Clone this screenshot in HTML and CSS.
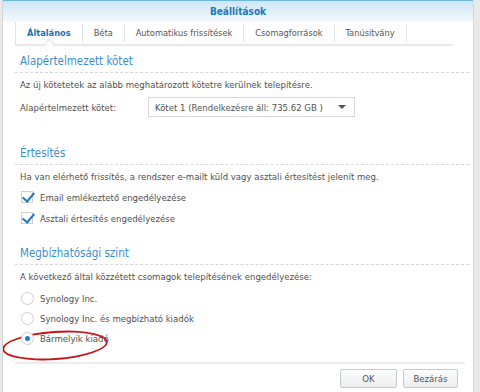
FILE: index.html
```html
<!DOCTYPE html>
<html lang="hu">
<head>
  <meta charset="UTF-8" />
  <title>Beállítások</title>
  <link rel="stylesheet" href="styles.css">
</head>
<body>

  <div class="window">
    <div class="titlebar">Beállítások</div>

    <!-- Fülek -->
    <div class="tabs">
      <div class="tab active">Általános</div>
      <div class="tab">Béta</div>
      <div class="tab">Automatikus frissítések</div>
      <div class="tab">Csomagforrások</div>
      <div class="tab">Tanúsítvány</div>
    </div>

    <div class="content">
      <div class="section volume">
        <h2>Alapértelmezett kötet</h2>
        <p>Az új kötetetek az alább meghatározott kötetre kerülnek telepítésre.</p>
        <div class="field">
          <span class="label">Alapértelmezett kötet:</span>
          <div class="select">
            <span>Kötet 1 (Rendelkezésre áll: 735.62 GB )</span>
            <span class="arrow"></span>
          </div>
        </div>
      </div>

      <div class="section notify">
        <h2>Értesítés</h2>
        <p>Ha van elérhető frissítés, a rendszer e-mailt küld vagy asztali értesítést jelenít meg.</p>
        <div class="option"><span class="check"></span>Email emlékeztető engedélyezése</div>
        <div class="option"><span class="check"></span>Asztali értesítés engedélyezése</div>
      </div>

      <div class="section trust">
        <h2>Megbízhatósági szint</h2>
        <p>A következő által közzétett csomagok telepítésének engedélyezése:</p>
        <div class="option"><span class="radio"></span>Synology Inc.</div>
        <div class="option"><span class="radio"></span>Synology Inc. és megbízható kiadók</div>
        <div class="option marked"><span class="radio on"></span>Bármelyik kiadó</div>
      </div>
    </div>

    <div class="footer">
      <button class="btn ok">OK</button>
      <button class="btn">Bezárás</button>
    </div>
  </div>

</body>
</html>
```

FILE: styles.css
```css
body {
  margin: 0;
  background: #e9e9e9;
  font-family: "DejaVu Sans Condensed", "DejaVu Sans", sans-serif;
  font-size: 9.5px;
  color: #505050;
}

.window {
  width: 470px;
  height: 392px;
  margin-left: 2px;
  background: #fff;
  border-left: 1px solid #d4d4d4;
  border-right: 1px solid #d4d4d4;
  overflow: hidden;
}

.titlebar {
  height: 22px;
  line-height: 22px;
  border-top: 1px solid #6fb6e0;
  background: linear-gradient(to bottom, #cde6f7, #f4f9fd);
  text-align: center;
  font-weight: bold;
  font-size: 10px;
  color: #1b78bd;
  box-sizing: border-box;
}

/* Fülek */
.tabs {
  display: flex;
  margin: 0 20px 0 12px;
  height: 22px;
  border-left: 1px solid #e4e4e4;
  border-bottom: 2px solid #e8e8e8;
}

.tab {
  position: relative;
  padding: 0 11px;
  margin: 2px 0;
  line-height: 18px;
  font-size: 9.2px;
  color: #555;
  border-right: 1px solid #e4e4e4;
}

.tab.active {
  color: #1a72b3;
  font-weight: bold;
}

.tab.active::after {
  content: "";
  position: absolute;
  left: 50%;
  bottom: -5px;
  width: 6px;
  height: 6px;
  margin-left: -3px;
  background: #fff;
  border-left: 1px solid #e0e0e0;
  border-top: 1px solid #e0e0e0;
  transform: rotate(45deg);
}

.content {
  padding: 0 4px 0 12px;
}

.section.volume { margin-bottom: 21px; }
.section.notify { margin-bottom: 10px; }

h2 {
  margin: 0;
  padding: 8px 0 4px 5px;
  font-weight: normal;
  font-size: 11.5px;
  color: #3d8fcc;
  border-bottom: 1px dashed #d6d6d6;
}

p {
  margin: 6px 0 0 5px;
}

.field {
  display: flex;
  align-items: center;
  margin: 7px 0 0 5px;
}

.label {
  width: 128px;
}

.select {
  display: flex;
  align-items: center;
  justify-content: space-between;
  width: 207px;
  height: 20px;
  padding: 0 8px 0 6px;
  border: 1px solid #d6d6d6;
  box-sizing: border-box;
}

.arrow {
  width: 0;
  height: 0;
  border-left: 4px solid transparent;
  border-right: 4px solid transparent;
  border-top: 4px solid #555;
}

.option {
  display: flex;
  align-items: center;
  height: 20px;
  margin: 1px 0 0 6px;
}

.notify p { margin-bottom: 5px; }
.trust .option { height: 19px; }
.trust p { margin-bottom: 7px; }

.check {
  position: relative;
  width: 10px;
  height: 10px;
  border: 1px solid #d0d0d0;
  margin-right: 7px;
}

.check::after {
  content: "";
  position: absolute;
  left: 3px;
  top: -2px;
  width: 5px;
  height: 10px;
  border-right: 2px solid #1b78c4;
  border-bottom: 2px solid #1b78c4;
  transform: rotate(40deg);
}

.radio {
  position: relative;
  width: 11px;
  height: 11px;
  border: 1px solid #cfcfcf;
  border-radius: 50%;
  margin-right: 6px;
  background: #fff;
}

.radio.on::after {
  content: "";
  position: absolute;
  left: 3px;
  top: 3px;
  width: 5px;
  height: 5px;
  border-radius: 50%;
  background: #1c80d8;
}

/* kézzel rajzolt piros ellipszis */
.option.marked {
  position: relative;
}

.option.marked::before {
  content: "";
  position: absolute;
  left: -19px;
  top: 2px;
  width: 102px;
  height: 25px;
  border: 2px solid #c5161c;
  border-radius: 50%;
  transform: rotate(-4deg);
}

.footer {
  display: flex;
  justify-content: flex-end;
  gap: 6px;
  margin: 14px 8px 0 12px;
  padding: 5px 7px 0 0;
  border-top: 2px solid #ececec;
}

.btn {
  width: 55px;
  height: 19px;
  font-family: inherit;
  font-size: 9.5px;
  color: #555;
  border: 1px solid #c9c9c9;
  border-radius: 2px;
  background: linear-gradient(to bottom, #fdfdfd, #eceef0);
}

.btn.ok {
  width: 57px;
}
```
